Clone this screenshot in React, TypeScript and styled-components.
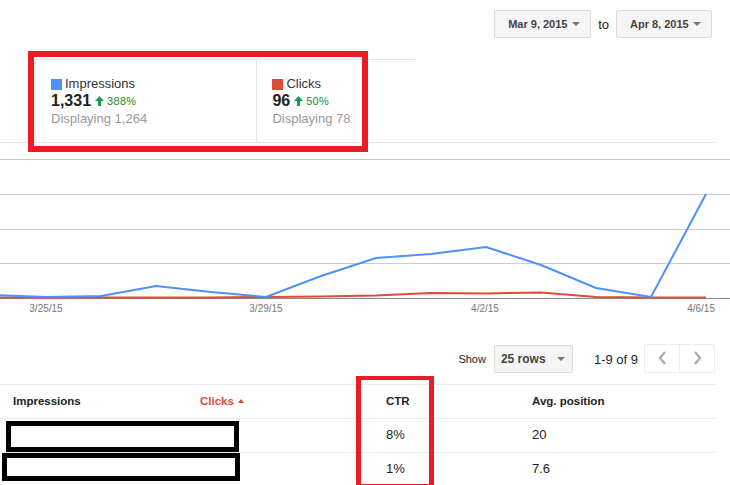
import React from "react";
import styled, { createGlobalStyle } from "styled-components";

// ─── Data ─────────────────────────────────────────────────────────────────────

const DAY_X0 = -9;
const DAY_STEP = 55;

const impressions = [295, 297, 296, 286, 292, 297, 276, 258, 254, 247, 265, 288, 297, 194];
const clicks      = [297.5, 297.5, 297.5, 297.5, 297.5, 297, 296.5, 295.5, 293, 293.5, 292.5, 297, 297.5, 297.5];

const gridY = [159, 194, 229, 263];
const axisLabels = [
  { text: "3/25/15", x: 46,  anchor: "middle" },
  { text: "3/29/15", x: 266, anchor: "middle" },
  { text: "4/2/15",  x: 485, anchor: "middle" },
  { text: "4/6/15",  x: 715, anchor: "end" },
];

const rows = [
  { ctr: "8%", position: "20" },
  { ctr: "1%", position: "7.6" },
];

const toPoints = (ys: number[]) =>
  ys.map((y, i) => `${DAY_X0 + DAY_STEP * i},${y}`).join(" ");

// ─── Styled components ────────────────────────────────────────────────────────

const GlobalStyle = createGlobalStyle`
  html, body { margin: 0; padding: 0; background: #fff; }
  body { font-family: "Liberation Sans", Arial, sans-serif; color: #222; }
`;

const Page = styled.div`
  position: relative;
  width: 730px;
  height: 485px;
  overflow: hidden;
  background: #fff;
`;

const Toolbar = styled.div`
  display: flex;
  justify-content: flex-end;
  align-items: center;
  gap: 7px;
  padding: 10px 18px 0 0;
  height: 28px;
`;

const DateButton = styled.button<{ $w: number }>`
  display: inline-flex;
  align-items: center;
  justify-content: space-between;
  box-sizing: border-box;
  height: 28px;
  width: ${({ $w }) => $w}px;
  padding: 0 10px 0 13px;
  background: #f5f5f5;
  border: 1px solid #dcdcdc;
  border-radius: 2px;
  font-family: inherit;
  font-size: 11px;
  font-weight: 700;
  color: #444;
`;

const Caret = styled.span<{ $color?: string }>`
  width: 0;
  height: 0;
  border-left: 4px solid transparent;
  border-right: 4px solid transparent;
  border-top: 4px solid ${({ $color }) => $color ?? "#777"};
`;

const ToLabel = styled.span`
  font-size: 13px;
  color: #222;
`;

const Scorecards = styled.div`
  display: flex;
  box-sizing: border-box;
  margin: 21px 0 0 35px;
  height: 83px;
  width: 380px;
  border-top: 1px solid #e5e5e5;
  border-left: 1px solid #e5e5e5;
`;

const Scorecard = styled.div<{ $w: number; $divider?: boolean }>`
  box-sizing: border-box;
  width: ${({ $w }) => $w}px;
  padding: 16px 0 0 15px;
  border-right: ${({ $divider }) => ($divider ? "1px solid #e5e5e5" : "none")};
`;

const MetricName = styled.div`
  display: flex;
  align-items: center;
  gap: 3px;
  font-size: 13px;
  line-height: 16px;
  color: #333;
`;

const Swatch = styled.span<{ $color: string }>`
  width: 11px;
  height: 11px;
  background: ${({ $color }) => $color};
`;

const MetricValue = styled.div`
  display: flex;
  align-items: center;
  gap: 4px;
  line-height: 18px;
  font-size: 16px;
  font-weight: 700;
  color: #222;
`;

const Delta = styled.span`
  display: inline-flex;
  align-items: center;
  gap: 3px;
  font-size: 11px;
  font-weight: 400;
  color: #1a8a1a;
  letter-spacing: 0.3px;
`;

const Displaying = styled.div`
  font-size: 13px;
  line-height: 18px;
  color: #999;
`;

const ChartFrame = styled.div`
  width: 730px;

  &::before {
    content: "";
    display: block;
    width: 715px;
    height: 1px;
    background: #e5e5e5;
  }
`;

const ChartSvg = styled.svg`
  display: block;
`;

const Controls = styled.div`
  display: flex;
  justify-content: flex-end;
  align-items: center;
  margin-top: 23px;
  padding-right: 15px;
  height: 28px;
`;

const ShowLabel = styled.span`
  font-size: 11px;
  color: #222;
  margin-right: 8px;
`;

const RowsSelect = styled.div`
  display: flex;
  align-items: center;
  justify-content: space-between;
  box-sizing: border-box;
  width: 79px;
  height: 28px;
  padding: 0 7px 0 6px;
  background: #f5f5f5;
  border: 1px solid #dcdcdc;
  border-radius: 2px;
  font-size: 12px;
  font-weight: 700;
  color: #444;
`;

const RangeText = styled.span`
  font-size: 13px;
  color: #222;
  margin: 0 6px 0 21px;
`;

const Pager = styled.div`
  display: flex;
  margin-top: -2px;
  border: 1px solid #eee;
  border-radius: 2px;
`;

const PageButton = styled.div<{ $first?: boolean }>`
  display: flex;
  align-items: center;
  justify-content: center;
  width: 34px;
  height: 27px;
  border-left: ${({ $first }) => ($first ? "none" : "1px solid #eee")};
`;

const Table = styled.div`
  width: 715px;
  margin-top: 11px;
`;

const TableRow = styled.div<{ $header?: boolean }>`
  display: grid;
  grid-template-columns: 187px 186px 146px 1fr;
  align-items: center;
  box-sizing: border-box;
  height: 34px;
  padding: 0 0 2px 13px;
  border-top: 1px solid #ebebeb;
  font-size: ${({ $header }) => ($header ? "11.5px" : "13px")};
  font-weight: ${({ $header }) => ($header ? 700 : 400)};
  color: #222;
`;

const SortedHead = styled.span`
  display: inline-flex;
  align-items: center;
  gap: 4px;
  color: #dd4b39;
`;

const SortArrow = styled.span`
  width: 0;
  height: 0;
  border-left: 3.5px solid transparent;
  border-right: 3.5px solid transparent;
  border-bottom: 4px solid #dd4b39;
`;

const Markup = styled.div<{ $color: string; $bw: string }>`
  position: absolute;
  box-sizing: border-box;
  border-style: solid;
  border-color: ${({ $color }) => $color};
  border-width: ${({ $bw }) => $bw};
`;

// ─── Small drawings ───────────────────────────────────────────────────────────

const UpArrow = () => (
  <svg width="9" height="10" viewBox="0 0 9 10">
    <path d="M4.5 0 L9 5 H6 V10 H3 V5 H0 Z" fill="#0f9d58" />
  </svg>
);

const Chevron = ({ dir }: { dir: "left" | "right" }) => (
  <svg width="9" height="14" viewBox="0 0 9 14">
    <polyline
      points={dir === "left" ? "7,1 2,7 7,13" : "2,1 7,7 2,13"}
      fill="none"
      stroke="#aaa"
      strokeWidth="2.2"
    />
  </svg>
);

// ─── Component ────────────────────────────────────────────────────────────────

export default function App() {
  return (
    <Page>
      <GlobalStyle />

      <Toolbar>
        <DateButton $w={97}>Mar 9, 2015 <Caret /></DateButton>
        <ToLabel>to</ToLabel>
        <DateButton $w={96}>Apr 8, 2015 <Caret /></DateButton>
      </Toolbar>

      <Scorecards>
        <Scorecard $w={222} $divider>
          <MetricName><Swatch $color="#4d90fe" />Impressions</MetricName>
          <MetricValue>1,331 <Delta><UpArrow />388%</Delta></MetricValue>
          <Displaying>Displaying 1,264</Displaying>
        </Scorecard>
        <Scorecard $w={158}>
          <MetricName><Swatch $color="#dd4b39" />Clicks</MetricName>
          <MetricValue>96 <Delta><UpArrow />50%</Delta></MetricValue>
          <Displaying>Displaying 78</Displaying>
        </Scorecard>
      </Scorecards>

      <ChartFrame>
        <ChartSvg width="730" height="179" viewBox="0 143 730 179">
          {gridY.map((y) => (
            <line key={y} x1="0" x2="730" y1={y + 0.5} y2={y + 0.5} stroke="#ccc" />
          ))}
          <line x1="0" x2="730" y1="298.5" y2="298.5" stroke="#888" />
          <polyline points={toPoints(clicks)} fill="none" stroke="#dd4b39" strokeWidth="2" />
          <polyline points={toPoints(impressions)} fill="none" stroke="#4d90fe" strokeWidth="2" />
          {axisLabels.map((l) => (
            <text
              key={l.text}
              x={l.x}
              y="312"
              textAnchor={l.anchor as "middle" | "end"}
              fontSize="10"
              fill="#777"
              fontFamily="Liberation Sans, Arial, sans-serif"
            >
              {l.text}
            </text>
          ))}
        </ChartSvg>
      </ChartFrame>

      <Controls>
        <ShowLabel>Show</ShowLabel>
        <RowsSelect>25 rows <Caret /></RowsSelect>
        <RangeText>1-9 of 9</RangeText>
        <Pager>
          <PageButton $first><Chevron dir="left" /></PageButton>
          <PageButton><Chevron dir="right" /></PageButton>
        </Pager>
      </Controls>

      <Table>
        <TableRow $header>
          <span>Impressions</span>
          <SortedHead>Clicks <SortArrow /></SortedHead>
          <span>CTR</span>
          <span>Avg. position</span>
        </TableRow>
        {rows.map((r) => (
          <TableRow key={r.ctr}>
            <span />
            <span />
            <span>{r.ctr}</span>
            <span>{r.position}</span>
          </TableRow>
        ))}
      </Table>

      <Markup $color="#ed1c24" $bw="6px" style={{ left: 28, top: 51, width: 340, height: 101 }} />
      <Markup $color="#ed1c24" $bw="4px 5px" style={{ left: 356, top: 376, width: 78, height: 112 }} />
      <Markup $color="#000" $bw="5px" style={{ left: 6, top: 421, width: 233, height: 31 }} />
      <Markup $color="#000" $bw="5px" style={{ left: 2, top: 453, width: 238, height: 28 }} />
    </Page>
  );
}
